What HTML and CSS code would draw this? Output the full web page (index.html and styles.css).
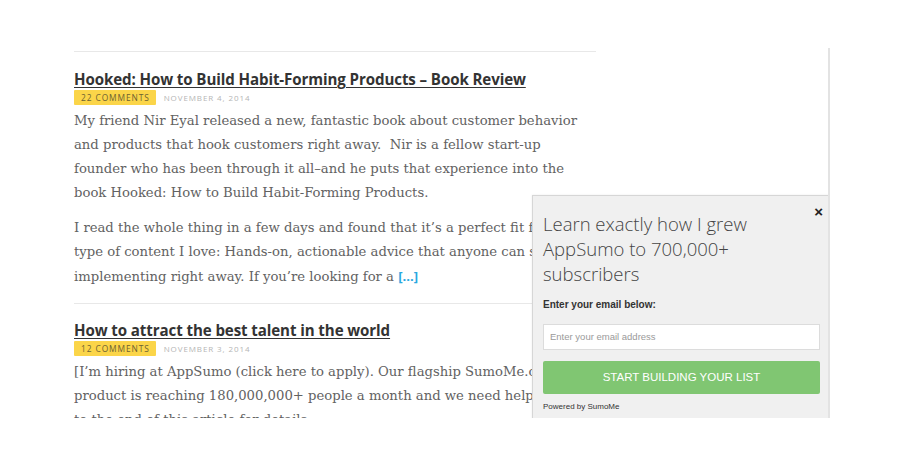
FILE: index.html
```html
<!DOCTYPE html>
<html>
<head>
<meta charset="utf-8">
<link rel="stylesheet" href="styles.css">
</head>
<body>
<div class="viewport">
  <div class="content">
    <hr class="sep sep-top">
    <article class="post">
      <h2 class="title"><a href="#">Hooked: How to Build Habit-Forming Products – Book Review</a></h2>
      <div class="meta"><span class="badge">22 COMMENTS</span><span class="date">NOVEMBER 4, 2014</span></div>
      <p class="para">My friend Nir Eyal released a new, fantastic book about customer behavior<br>and products that hook customers right away.&nbsp; Nir is a fellow start-up<br>founder who has been through it all–and he puts that experience into the<br>book Hooked: How to Build Habit-Forming Products.</p>
      <p class="para">I read the whole thing in a few days and found that it’s a perfect fit for the<br>type of content I love: Hands-on, actionable advice that anyone can start<br>implementing right away. If you’re looking for a <a class="more" href="#">[...]</a></p>
    </article>
    <hr class="sep">
    <article class="post post-2">
      <h2 class="title"><a href="#">How to attract the best talent in the world</a></h2>
      <div class="meta"><span class="badge">12 COMMENTS</span><span class="date">NOVEMBER 3, 2014</span></div>
      <p class="para">[I’m hiring at AppSumo (click here to apply). Our flagship SumoMe.com<br>product is reaching 180,000,000+ people a month and we need help. Scroll<br>to the end of this article for details.</p>
    </article>
  </div>
  <div class="popup">
    <button class="close" type="button">×</button>
    <h3 class="popup-title">Learn exactly how I grew<br>AppSumo to 700,000+<br>subscribers</h3>
    <div class="label">Enter your email below:</div>
    <div class="input">Enter your email address</div>
    <div class="btn">START BUILDING YOUR LIST</div>
    <div class="powered">Powered by SumoMe</div>
  </div>
</div>
</body>
</html>
```
FILE: styles.css
```css
html, body {
  margin: 0;
  padding: 0;
  background: #fff;
}
body {
  width: 900px;
  height: 468px;
  overflow: hidden;
}
.viewport {
  position: relative;
  margin-top: 48px;
  width: 828px;
  height: 370px;
  overflow: hidden;
  border-right: 2px solid #e3e3e3;
}
.content {
  margin-left: 74px;
  width: 522px;
  padding-top: 3px;
}
.sep {
  border: 0;
  border-top: 1px solid #e8e8e8;
  margin: 0;
}
.post {
  padding-top: 16px;
  padding-bottom: 14px;
}
.post-2 {
  padding-top: 15px;
}
.title {
  margin: 0;
  font-family: "Open Sans", sans-serif;
  font-weight: 700;
  font-size: 15.1px;
  line-height: 22px;
  letter-spacing: -0.1px;
}
.title a {
  color: #333;
  text-decoration: underline;
  text-decoration-thickness: 1px;
  text-underline-offset: 2px;
}
.meta {
  display: flex;
  align-items: center;
  height: 15px;
  margin-top: 0;
}
.badge {
  background: #fbd549;
  color: #6d6232;
  font-family: "Open Sans", sans-serif;
  font-size: 8.4px;
  letter-spacing: 0.9px;
  line-height: 15px;
  padding: 0 6px 0 7px;
  border-radius: 1px;
}
.date {
  margin-left: 8px;
  color: #b5b5b5;
  font-family: "Open Sans", sans-serif;
  font-size: 8px;
  letter-spacing: 0.9px;
}
.para {
  margin: 4px 0 0;
  font-family: "DejaVu Serif", serif;
  font-size: 13.2px;
  line-height: 24px;
  color: #626262;
  white-space: nowrap;
}
.para + .para {
  margin-top: 11px;
}
.more {
  color: #2aa8df;
  font-family: "Open Sans", sans-serif;
  font-weight: 700;
  text-decoration: none;
}
.popup {
  position: absolute;
  left: 532px;
  top: 147px;
  width: 277px;
  height: 240px;
  padding: 15px 10px 0 10px;
  background: #f0f0f0;
  border: 1px solid #d6d6d6;
  box-shadow: 0 0 2px rgba(0,0,0,0.08);
}
.close {
  position: absolute;
  right: 7px;
  top: 7px;
  border: 0;
  background: none;
  padding: 0;
  font-family: "Liberation Sans", sans-serif;
  font-weight: 700;
  font-size: 15px;
  color: #222;
}
.popup-title {
  margin: 0;
  font-family: "Open Sans", sans-serif;
  font-weight: 300;
  font-size: 18.5px;
  line-height: 25px;
  color: #444;
}
.label {
  margin-top: 13px;
  font-family: "Liberation Sans", sans-serif;
  font-weight: 700;
  font-size: 10px;
  color: #333;
}
.input {
  margin-top: 14px;
  height: 24px;
  line-height: 24px;
  background: #fff;
  border: 1px solid #dcdcdc;
  padding-left: 6px;
  font-family: "Liberation Sans", sans-serif;
  font-size: 9.5px;
  color: #9a9a9a;
}
.btn {
  margin-top: 11px;
  height: 33px;
  line-height: 33px;
  background: #80c672;
  border-radius: 2px;
  text-align: center;
  color: #fff;
  font-family: "Liberation Sans", sans-serif;
  font-size: 11.5px;
}
.powered {
  margin-top: 8px;
  font-family: "Liberation Sans", sans-serif;
  font-size: 8px;
  color: #333;
}
```
